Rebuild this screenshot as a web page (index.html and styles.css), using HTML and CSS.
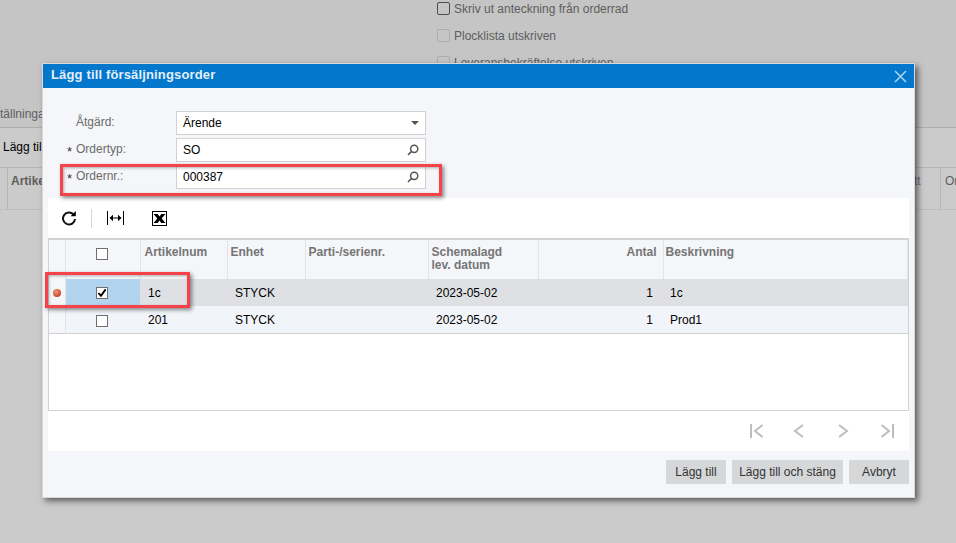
FILE: index.html
```html
<!DOCTYPE html>
<html lang="sv">
  <head>
    <meta charset="UTF-8" />
    <title>Lägg till försäljningsorder</title>
    <link rel="stylesheet" href="styles.css">
  </head>
  <body>
    <div class="page">
      <div class="page-top">
        <div class="page-checks">
          <label class="page-check"><span class="page-box dark"></span>Skriv ut anteckning från orderrad</label>
          <label class="page-check"><span class="page-box"></span>Plocklista utskriven</label>
          <label class="page-check"><span class="page-box"></span>Leveransbekräftelse utskriven</label>
        </div>
        <div class="page-tab">tällninga</div>
      </div>
      <div class="page-toolbar">Lägg til</div>
      <div class="page-head">
        <div class="page-col first">Artike</div>
        <div class="page-col rest"></div>
        <div class="page-col cut">tt</div>
        <div class="page-col last">Or</div>
      </div>
    </div>

    <div class="modal">
      <div class="modal-title">
        <span class="modal-name">Lägg till försäljningsorder</span>
        <svg class="close" width="13" height="13" viewBox="0 0 13 13"><path d="M1 1l11 11M12 1L1 12" /></svg>
      </div>
      <div class="modal-body">
        <div class="form">
          <div class="form-row">
            <span class="star"></span><span class="form-label">Åtgärd:</span>
            <div class="input"><span>Ärende</span><span class="caret"></span></div>
          </div>
          <div class="form-row">
            <span class="star">*</span><span class="form-label">Ordertyp:</span>
            <div class="input">
              <span>SO</span>
              <svg class="search" width="12" height="12" viewBox="0 0 12 12"><circle cx="7.2" cy="4.8" r="3.6" /><path d="M4.6 7.4L1 11" /></svg>
            </div>
          </div>
          <div class="form-row">
            <span class="star">*</span><span class="form-label">Ordernr.:</span>
            <div class="input">
              <span>000387</span>
              <svg class="search" width="12" height="12" viewBox="0 0 12 12"><circle cx="7.2" cy="4.8" r="3.6" /><path d="M4.6 7.4L1 11" /></svg>
            </div>
          </div>
        </div>

        <div class="panel">
          <div class="toolbar">
            <svg class="tool" width="16" height="16" viewBox="0 0 16 16"><path class="refresh" d="M12.6 4.6A6 6 0 1 0 14 9" /><path d="M9.6 6.2h5.2V1z" /></svg>
            <span class="tool-sep"></span>
            <svg class="tool fit" width="17" height="14" viewBox="0 0 17 14"><path class="thin" d="M.5 0v14M16.5 0v14M3 7h11" /><path d="M6 3.8L2.6 7 6 10.2zM11 3.8L14.4 7 11 10.2z" /></svg>
            <svg class="tool excel" width="15" height="15" viewBox="0 0 15 15"><rect class="thin" x=".5" y=".5" width="14" height="14" /><path d="M1.5 3h4.2L7.5 5.4 9.3 3h4.2L9.7 7.5l3.8 4.5H9.3L7.5 9.6 5.7 12H1.5l3.8-4.5z" /></svg>
          </div>

          <div class="grid-wrap">
            <table class="grid">
              <colgroup>
                <col class="c-dot"><col class="c-check"><col class="c-item"><col class="c-unit">
                <col class="c-lot"><col class="c-date"><col class="c-qty"><col>
              </colgroup>
              <thead>
                <tr>
                  <th></th>
                  <th class="center"><span class="box"></span></th>
                  <th class="item-head">Artikelnum</th>
                  <th>Enhet</th>
                  <th>Parti-/serienr.</th>
                  <th>Schemalagd<br>lev. datum</th>
                  <th class="right">Antal</th>
                  <th class="desc">Beskrivning</th>
                </tr>
              </thead>
              <tbody>
                <tr class="active">
                  <td class="dot-cell"><span class="dot"></span></td>
                  <td class="center picked">
                    <span class="box">
                      <svg width="10" height="10" viewBox="0 0 11 11"><path d="M1.5 5.5l2.8 3L9.5 1.5" /></svg>
                    </span>
                  </td>
                  <td>1c</td>
                  <td>STYCK</td>
                  <td></td>
                  <td>2023-05-02</td>
                  <td class="right">1</td>
                  <td class="desc">1c</td>
                </tr>
                <tr>
                  <td class="dot-cell"></td>
                  <td class="center"><span class="box"></span></td>
                  <td>201</td>
                  <td>STYCK</td>
                  <td></td>
                  <td>2023-05-02</td>
                  <td class="right">1</td>
                  <td class="desc">Prod1</td>
                </tr>
              </tbody>
            </table>
          </div>

          <div class="pager">
            <svg class="pager-first" width="16" height="14" viewBox="0 0 16 14"><path d="M2 0v14M13.5 1L6 7l7.5 6" /></svg>
            <svg width="16" height="14" viewBox="0 0 16 14"><path d="M12 1L4 7l8 6" /></svg>
            <svg width="16" height="14" viewBox="0 0 16 14"><path d="M4 1l8 6-8 6" /></svg>
            <svg width="16" height="14" viewBox="0 0 16 14"><path d="M14 0v14M2.5 1L10 7l-7.5 6" /></svg>
          </div>
        </div>

        <div class="actions">
          <button class="btn add">Lägg till</button>
          <button class="btn add-close">Lägg till och stäng</button>
          <button class="btn cancel">Avbryt</button>
        </div>
      </div>
    </div>

    <div class="mark mark-order"></div>
    <div class="mark mark-row"></div>
  </body>
</html>
```

FILE: styles.css
```css
body {
  margin: 0;
  width: 956px;
  height: 543px;
  position: relative;
  overflow: hidden;
  background: #cbcbcb;
  font-family: "Liberation Sans", Arial, sans-serif;
  font-size: 12px;
  color: #000;
}

/* page behind the dialog */
.page-top {
  height: 127px;
  background: #c4c5c4;
  border-bottom: 1px solid #aeaeae;
  position: relative;
}

.page-checks {
  padding-left: 437px;
  overflow: hidden;
  height: 70px;
}

.page-check {
  display: flex;
  align-items: center;
  gap: 4px;
  height: 27px;
  color: #5e5e5e;
  line-height: 16px;
  position: relative;
  top: -5px;
}

.page-box {
  width: 11px;
  height: 11px;
  border: 1px solid #adadad;
  border-radius: 2px;
}

.page-box.dark {
  border-color: #4d4d4d;
}

.page-tab {
  position: absolute;
  left: 0;
  top: 107px;
  color: #5e5e5e;
}

.page-toolbar {
  height: 40px;
  line-height: 38px;
  padding-left: 3px;
  box-sizing: border-box;
  border-bottom: 1px solid #b5b5b5;
}

.page-head {
  display: flex;
  height: 41px;
  color: #5e5e5e;
  border-bottom: 1px solid #bdbdbd;
}

.page-col {
  line-height: 27px;
  border-left: 1px solid #b5b5b5;
}

.page-col.first {
  width: 35px;
  margin-left: 7px;
  padding-left: 3px;
  font-weight: bold;
  box-sizing: border-box;
}

.page-col.rest {
  flex: 1;
  border-left: none;
}

.page-col.cut {
  width: 26px;
  border-left: none;
  color: #777;
}

.page-col.last {
  width: 16px;
  padding-left: 4px;
  box-sizing: border-box;
  overflow: hidden;
}

/* dialog */
.modal {
  position: absolute;
  left: 42px;
  top: 63px;
  width: 873px;
  height: 435px;
  background: #f4f6f9;
  box-shadow: 3px 3px 6px rgba(0, 0, 0, 0.55);
  outline: 1px solid #d9d9d9;
  outline-offset: -1px;
  display: flex;
  flex-direction: column;
}

.modal-title {
  height: 25px;
  flex-shrink: 0;
  background: #0277cc;
  color: #e3f0fa;
  font-size: 13px;
  font-weight: bold;
  padding: 0 9px;
  display: flex;
  align-items: center;
  justify-content: space-between;
}

.modal-name {
  margin-top: -2px;
  letter-spacing: 0.15px;
}

.close {
  fill: none;
  stroke: #a5d3f2;
  stroke-width: 1.6;
  margin-top: 2px;
  margin-right: -1px;
}

.modal-body {
  flex: 1;
  padding: 0 6px;
}

.form {
  height: 110px;
  padding-top: 23px;
  box-sizing: border-box;
}

.form-row {
  display: flex;
  align-items: center;
  height: 24px;
  margin-bottom: 3px;
}

.star {
  width: 9px;
  margin-left: 19px;
  color: #333;
  font-size: 13px;
  position: relative;
  top: 1px;
}

.form-label {
  width: 100px;
  color: #6b6b6b;
  position: relative;
  top: -1px;
}

.input {
  width: 250px;
  height: 24px;
  box-sizing: border-box;
  background: #fff;
  border: 1px solid #d2d2d2;
  padding: 0 6px;
  display: flex;
  align-items: center;
  justify-content: space-between;
}

.caret {
  width: 0;
  height: 0;
  border-left: 4px solid transparent;
  border-right: 4px solid transparent;
  border-top: 4px solid #555;
}

.search {
  fill: none;
  stroke: #555;
  stroke-width: 1.5;
}

.panel {
  background: #fff;
  width: 861px;
  height: 253px;
  display: flex;
  flex-direction: column;
}

.toolbar {
  height: 40px;
  flex-shrink: 0;
  display: flex;
  align-items: center;
  padding-left: 13px;
  box-sizing: border-box;
}

.tool-sep {
  width: 1px;
  height: 19px;
  background: #d5d5d5;
  margin: 0 15px 0 14px;
}

.refresh {
  fill: none;
  stroke: #111;
  stroke-width: 2;
}

.thin {
  fill: none;
  stroke: #000;
  stroke-width: 1;
}

.excel {
  margin-left: 28px;
}

.grid-wrap {
  height: 173px;
  flex-shrink: 0;
  box-sizing: border-box;
  border: 1px solid #d2d2d2;
  border-top-width: 2px;
}

.grid {
  width: 100%;
  table-layout: fixed;
  border-collapse: collapse;
}

.c-dot { width: 16px; }
.c-check { width: 75px; }
.c-item { width: 87px; }
.c-unit { width: 78px; }
.c-lot { width: 123px; }
.c-date { width: 110px; }
.c-qty { width: 125px; }

.grid th {
  height: 39px;
  padding: 6px 3px 0;
  box-sizing: border-box;
  background: #f4f6f9;
  color: #757575;
  font-weight: bold;
  text-align: left;
  vertical-align: top;
  line-height: 13px;
  border-right: 1px solid #e1e4e8;
}

.grid th.item-head {
  padding-left: 4px;
}

.grid td {
  height: 27px;
  padding: 0 8px;
  box-sizing: border-box;
  background: #f1f4f9;
  white-space: nowrap;
}

.grid tr.active td {
  background: #dee0e4;
}

.grid tbody tr:last-child td {
  border-bottom: 1px solid #d2d2d2;
  padding-top: 1px;
}

.grid td.center {
  text-align: center;
  padding: 0;
  vertical-align: middle;
}

.grid th.center {
  text-align: center;
  padding: 8px 0 0;
}

.grid th.right {
  text-align: right;
  padding-right: 6px;
}

.grid td.right {
  text-align: right;
  padding-right: 10px;
}

.grid th.desc {
  padding-left: 2px;
}

.grid td.desc {
  padding-left: 7px;
}

.grid td.dot-cell,
.grid tr.active td.dot-cell {
  padding: 0;
  background: #f4f6f9;
  border-right: 1px solid #e1e4e8;
  text-align: center;
}

.grid tr.active td.picked {
  background: #b3d4ee;
}

.box {
  display: inline-flex;
  align-items: center;
  justify-content: center;
  box-sizing: border-box;
  width: 12px;
  height: 12px;
  margin-right: 1px;
  background: #fff;
  border: 1px solid #6f6f6f;
  vertical-align: top;
}

.box svg {
  fill: none;
  stroke: #000;
  stroke-width: 2;
}

.grid td.center .box {
  vertical-align: middle;
}

.dot {
  display: inline-block;
  width: 8px;
  height: 8px;
  border-radius: 50%;
  background: radial-gradient(circle at 40% 35%, #f09a80, #c8432c 70%);
  vertical-align: middle;
}

.pager {
  flex: 1;
  display: flex;
  align-items: center;
  justify-content: flex-end;
  gap: 28px;
  padding-right: 14px;
}

.pager-first {
  margin-right: -2px;
}

.pager svg {
  fill: none;
  stroke: #bdbdbd;
  stroke-width: 2;
}

.actions {
  display: flex;
  justify-content: flex-end;
  gap: 6px;
  width: 861px;
  margin-top: 9px;
}

.btn {
  height: 24px;
  padding: 0;
  border: none;
  background: #d6d7d9;
  color: #333;
  font-family: inherit;
  font-size: 12px;
}

.btn.add { width: 60px; }
.btn.add-close { width: 111px; }
.btn.cancel { width: 60px; }

/* red annotations drawn on the screenshot */
.mark {
  position: absolute;
  box-sizing: border-box;
  border: 3px solid #f6434a;
  box-shadow: 2px 2px 4px rgba(0, 0, 0, 0.45), inset 1px 1px 3px rgba(0, 0, 0, 0.3);
}

.mark-order {
  left: 60px;
  top: 164px;
  width: 382px;
  height: 32px;
}

.mark-row {
  left: 45px;
  top: 272px;
  width: 145px;
  height: 36px;
}
```
